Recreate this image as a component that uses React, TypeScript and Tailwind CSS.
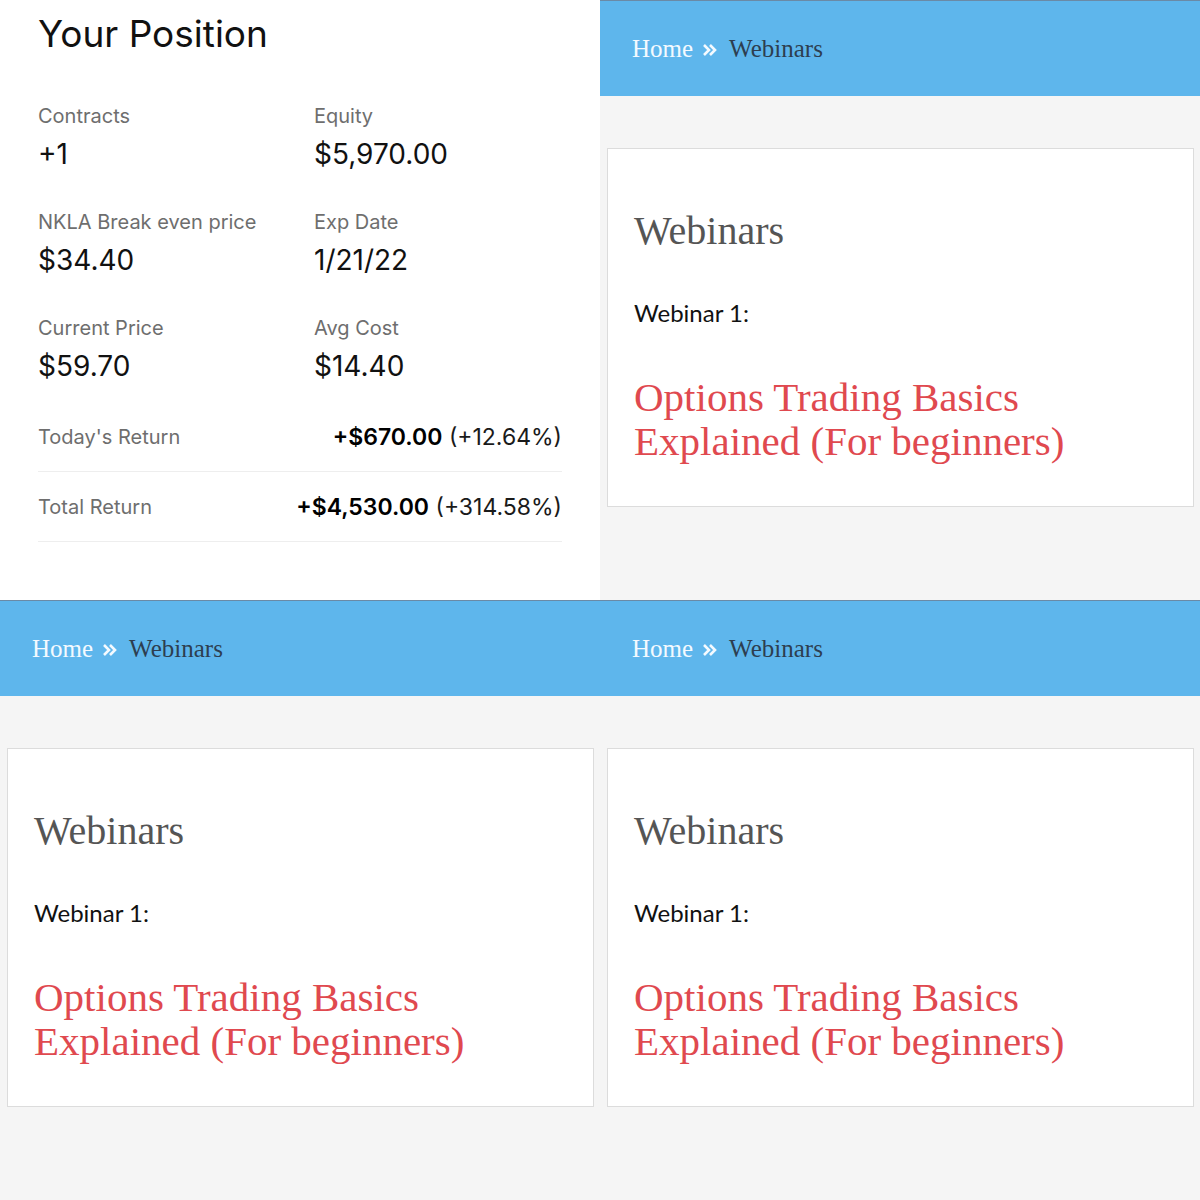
import { ReactNode } from 'react'

const sans = { fontFamily: 'Inter, "Liberation Sans", sans-serif' }
const serif = { fontFamily: '"Liberation Serif", "Times New Roman", serif' }

interface StatProps {
  label: string
  value: string
}

const Stat = ({ label, value }: StatProps) => (
  <div className="flex flex-col">
    <p className="text-[20px] leading-[24px] text-[#6e6e6e]">{label}</p>
    <p className="mt-[10px] text-[28px] leading-[32px] text-[#111]">{value}</p>
  </div>
)

interface ReturnRowProps {
  label: string
  amount: string
  percent: string
}

const ReturnRow = ({ label, amount, percent }: ReturnRowProps) => (
  <div className="flex h-[70px] items-center justify-between border-b border-[#eeeeee]">
    <span className="text-[20px] leading-[24px] text-[#6e6e6e]">{label}</span>
    <span className="text-[23px] leading-[28px] text-[#1a1a1a]">
      <span className="font-semibold text-black">{amount}</span> {percent}
    </span>
  </div>
)

const Position = () => (
  <div className="h-[600px] w-[600px] bg-white pl-[38px] pr-[38px]" style={sans}>
    <h1 className="pt-[12px] text-[37px] font-normal leading-[44px] text-[#111]">
      Your Position
    </h1>
    <div className="mt-[48px] grid grid-cols-[276px_1fr] gap-y-[40px]">
      <Stat label="Contracts" value="+1" />
      <Stat label="Equity" value="$5,970.00" />
      <Stat label="NKLA Break even price" value="$34.40" />
      <Stat label="Exp Date" value="1/21/22" />
      <Stat label="Current Price" value="$59.70" />
      <Stat label="Avg Cost" value="$14.40" />
    </div>
    <div className="mt-[20px]">
      <ReturnRow label="Today's Return" amount="+$670.00" percent="(+12.64%)" />
      <ReturnRow label="Total Return" amount="+$4,530.00" percent="(+314.58%)" />
    </div>
  </div>
)

const Chevrons = () => (
  <svg width="15" height="14" viewBox="0 0 15 14" fill="none" className="mx-[9px] mt-[2px]">
    <path d="M2 2l5 5-5 5M8 2l5 5-5 5" stroke="#f4faff" strokeWidth="2.6" />
  </svg>
)

const Breadcrumb = () => (
  <div
    className="flex h-[96px] items-center border-t border-[#6a8aa6] bg-[#5eb6ec] pl-[32px]"
    style={serif}
  >
    <span className="text-[25px] leading-[28px] text-[#f4faff]">Home</span>
    <Chevrons />
    <span className="ml-[3px] text-[25px] leading-[28px] text-[#2d3e50]">Webinars</span>
  </div>
)

const WebinarCard = ({ children }: { children?: ReactNode }) => (
  <div className="mt-[52px] ml-[7px] mr-[6px] h-[359px] border border-[#dcdcdc] bg-white pl-[26px] pt-[60px]">
    <h2 className="text-[40px] leading-[44px] text-[#555]" style={serif}>
      Webinars
    </h2>
    <p
      className="mt-[46px] text-[24px] leading-[28px] text-[#111]"
      style={{ fontFamily: 'Lato, "Open Sans", sans-serif' }}
    >
      Webinar 1:
    </p>
    {children}
  </div>
)

const WebinarPage = () => (
  <div className="h-[600px] w-[600px] bg-[#f5f5f5]">
    <Breadcrumb />
    <WebinarCard>
      <p className="mt-[48px] text-[41px] leading-[44px] text-[#e0494f]" style={serif}>
        Options Trading Basics
        <br />
        Explained (For beginners)
      </p>
    </WebinarCard>
  </div>
)

export default function App() {
  return (
    <div className="grid h-[1200px] w-[1200px] grid-cols-2 overflow-hidden">
      <Position />
      <WebinarPage />
      <WebinarPage />
      <WebinarPage />
    </div>
  )
}
